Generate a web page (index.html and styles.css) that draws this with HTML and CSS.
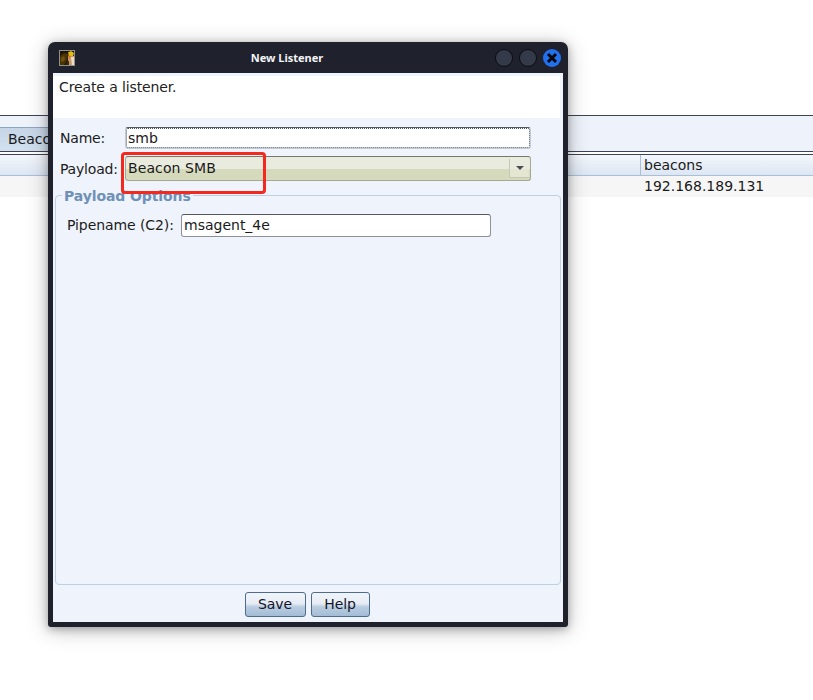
FILE: index.html
```html
<!DOCTYPE html>
<html lang="en">
<head>
<meta charset="utf-8">
<title>New Listener</title>
<link rel="stylesheet" href="styles.css">
</head>
<body>
<div class="app">
  <div class="tabstrip"><div class="tab">Beacon</div></div>
  <div class="table">
    <div class="thead"><div class="col-main"></div><div class="col-last">beacons</div></div>
    <div class="trow"><div class="col-main"></div><div class="col-last">192.168.189.131</div></div>
  </div>
</div>

<div class="window">
  <div class="titlebar">
    <svg class="appicon" width="16" height="16" viewBox="0 0 16 16" aria-hidden="true">
      <rect x="0.5" y="0.5" width="15" height="15" fill="#1e1505" stroke="#8f8f8c"/>
      <path d="M1 6 L5 3 L9 4 L8 10 L5 15 L1 15 Z" fill="#4a3406"/>
      <path d="M2 8 L5 6 L6 9 L4 12 L2 11 Z" fill="#6e520b"/>
      <path d="M9 2.5 L12 1 L15 3 L14 6 L10 6 Z" fill="#e3bd14"/>
      <path d="M9 6 L15 6 L15 15 L9 15 Z" fill="#c89a70"/>
      <path d="M12 7 L15 7 L15 15 L13 15 Z" fill="#efdcc4"/>
      <path d="M9 5 L12 6 L10 9 Z" fill="#d9740e"/>
      <path d="M8 11 L10 11 L10 15 L7 15 Z" fill="#3a2a10"/>
    </svg>
    <div class="title">New Listener</div>
    <div class="controls">
      <span class="dot"></span>
      <span class="dot"></span>
      <span class="dot close">
        <svg width="18" height="18" viewBox="0 0 18 18" aria-hidden="true"><path d="M5 5 L13 13 M13 5 L5 13" stroke="#05070c" stroke-width="3"/></svg>
      </span>
    </div>
  </div>
  <div class="content">
    <div class="banner">Create a listener.</div>
    <div class="form">
      <div class="row row-name">
        <label class="label">Name:</label>
        <div class="input focused">smb</div>
      </div>
      <div class="row row-payload">
        <label class="label">Payload:</label>
        <div class="select">
          <span class="select-text">Beacon SMB</span>
          <span class="select-btn"><span class="caret"></span></span>
        </div>
      </div>
    </div>
    <div class="fieldset">
      <div class="legend">Payload Options</div>
      <div class="opt-row">
        <label class="opt-label">Pipename (C2):</label>
        <div class="input opt-input">msagent_4e</div>
      </div>
    </div>
    <div class="buttons">
      <div class="btn btn-save">Save</div>
      <div class="btn btn-help">Help</div>
    </div>
    <div class="callout"></div>
  </div>
</div>
</body>
</html>
```
FILE: styles.css
```css
* { box-sizing: border-box; }
html, body { margin: 0; padding: 0; height: 100%; background: #fff; overflow: hidden; }
body { font-family: "DejaVu Sans", sans-serif; font-size: 14px; color: #1a1a1a; }

.app { padding-top: 115px; }
.tabstrip {
  height: 37px;
  background: #eef2fa;
  border-top: 1px solid #3d4450;
  border-bottom: 1px solid #3d4450;
  padding-top: 11px;
  display: flex;
  align-items: stretch;
}
.tab {
  width: 60px;
  padding: 2px 0 0 8px;
  background: linear-gradient(#c6d6e7, #d2e0ef);
  border-top: 1px solid #8ea5bc;
  line-height: 18px;
  overflow: hidden;
}
.table { border-top: 1px solid #3d4450; margin-top: 2px; }
.thead {
  display: flex;
  height: 21px;
  background: linear-gradient(#f4f7fc, #dce6f2);
  border-bottom: 1px solid #a9c0d8;
}
.trow { display: flex; height: 21px; background: #f6f6f6; }
.col-main { width: 640px; }
.col-last { flex: 1; padding-left: 4px; line-height: 20px; }
.thead .col-last { border-left: 1px solid #a9c0d8; padding-left: 3px; }

.window {
  position: absolute;
  left: 48px;
  top: 42px;
  width: 520px;
  height: 585px;
  background: #1f222d;
  border-radius: 7px 7px 3px 3px;
  box-shadow: 0 2px 8px rgba(0, 0, 0, 0.28), 0 3px 22px rgba(0, 0, 0, 0.24);
  padding: 0 5px 5px;
  display: flex;
  flex-direction: column;
}
.titlebar {
  height: 31px;
  flex: none;
  display: flex;
  align-items: center;
  position: relative;
}
.appicon { margin-left: 6px; flex: none; }
.title {
  position: absolute;
  left: 0;
  right: 42px;
  top: 8px;
  text-align: center;
  font-family: "Noto Sans", sans-serif;
  font-size: 11px;
  font-weight: 700;
  line-height: 16px;
  color: #f3f4f6;
}
.controls { margin-left: auto; margin-right: 2px; display: flex; gap: 6px; position: relative; }
.dot {
  width: 18px;
  height: 18px;
  border-radius: 50%;
  background: #353a4a;
  border: 1px solid #0a0c12;
  display: block;
}
.close { background: #2270ee; border: 0; }
.close svg { display: block; }

.content {
  flex: 1;
  background: #eff3fb;
  display: flex;
  flex-direction: column;
  position: relative;
  min-height: 0;
}
.banner {
  height: 42px;
  margin: 3px 3px 0 0;
  background: #fff;
  padding: 1px 0 0 6px;
  line-height: 20px;
  color: #222;
  letter-spacing: -0.12px;
}
.form { padding: 9px 32px 0 7px; }
.row { display: flex; align-items: center; }
.row-name { height: 22px; }
.row-payload { height: 25px; margin-top: 7px; }
.label { width: 65px; flex: none; color: #1c1c1c; white-space: nowrap; letter-spacing: -0.2px; }
.input {
  background: #fff;
  border: 1px solid #8d9199;
  border-top-color: #55585f;
  border-radius: 3px;
  padding-left: 2px;
  line-height: 20px;
  flex: 1;
}
.focused {
  height: 22px;
  outline: 1px dotted #44566c;
  outline-offset: -2px;
  border-color: #c4c8cf;
  border-top-color: #55585f;
}
.select {
  flex: 1;
  height: 25px;
  border: 1px solid #a6a893;
  border-top-color: #77786a;
  border-radius: 3px;
  background: linear-gradient(#e9ebdf 0, #e9ebdf 12px, #d6dabc 12px, #d6dabc 100%);
  display: flex;
  align-items: center;
  padding: 0 0 2px 2px;
  position: relative;
}
.select-text { flex: 1; letter-spacing: 0.1px; }
.select-btn {
  width: 20px;
  align-self: stretch;
  margin: 2px 1px 0 0;
  border-left: 1px solid #c6c8b4;
  border-bottom: 1px solid #c6c8b4;
  background: linear-gradient(#e9ebdf 0, #e9ebdf 10px, #e4e6d2 10px);
  display: flex;
  align-items: center;
  justify-content: center;
}
.caret {
  width: 0;
  height: 0;
  border-left: 4px solid transparent;
  border-right: 4px solid transparent;
  border-top: 4px solid #4c4c4c;
}
.fieldset {
  flex: none;
  height: 390px;
  margin: 14px 2px 0;
  border: 1px solid #bfcfe2;
  border-radius: 4px;
  position: relative;
  padding: 18px 0 0 11px;
}
.legend {
  position: absolute;
  left: 6px;
  top: -8px;
  padding: 0 2px;
  background: #eff3fb;
  font-weight: 700;
  line-height: 16px;
  color: #6f90b6;
  letter-spacing: -0.1px;
}
.opt-row { display: flex; align-items: center; height: 23px; }
.opt-label { width: 114px; flex: none; white-space: nowrap; color: #1c1c1c; padding-bottom: 1px; letter-spacing: -0.08px; }
.opt-input { flex: none; width: 310px; height: 23px; }
.buttons {
  display: flex;
  justify-content: center;
  gap: 5px;
  margin: 7px 2px 0 0;
}
.btn {
  height: 25px;
  border: 1px solid #4e6d8c;
  border-radius: 3px;
  background: linear-gradient(#f0f4fa 0, #e8edf5 45%, #b9cde0 60%, #a3bcd6 100%);
  text-align: center;
  line-height: 22px;
  color: #14142a;
  letter-spacing: -0.1px;
}
.btn-save { width: 61px; }
.btn-help { width: 59px; }
.callout {
  position: absolute;
  left: 68px;
  top: 79px;
  width: 145px;
  height: 42px;
  border: 3px solid #f5281e;
  border-radius: 4px;
}
```
